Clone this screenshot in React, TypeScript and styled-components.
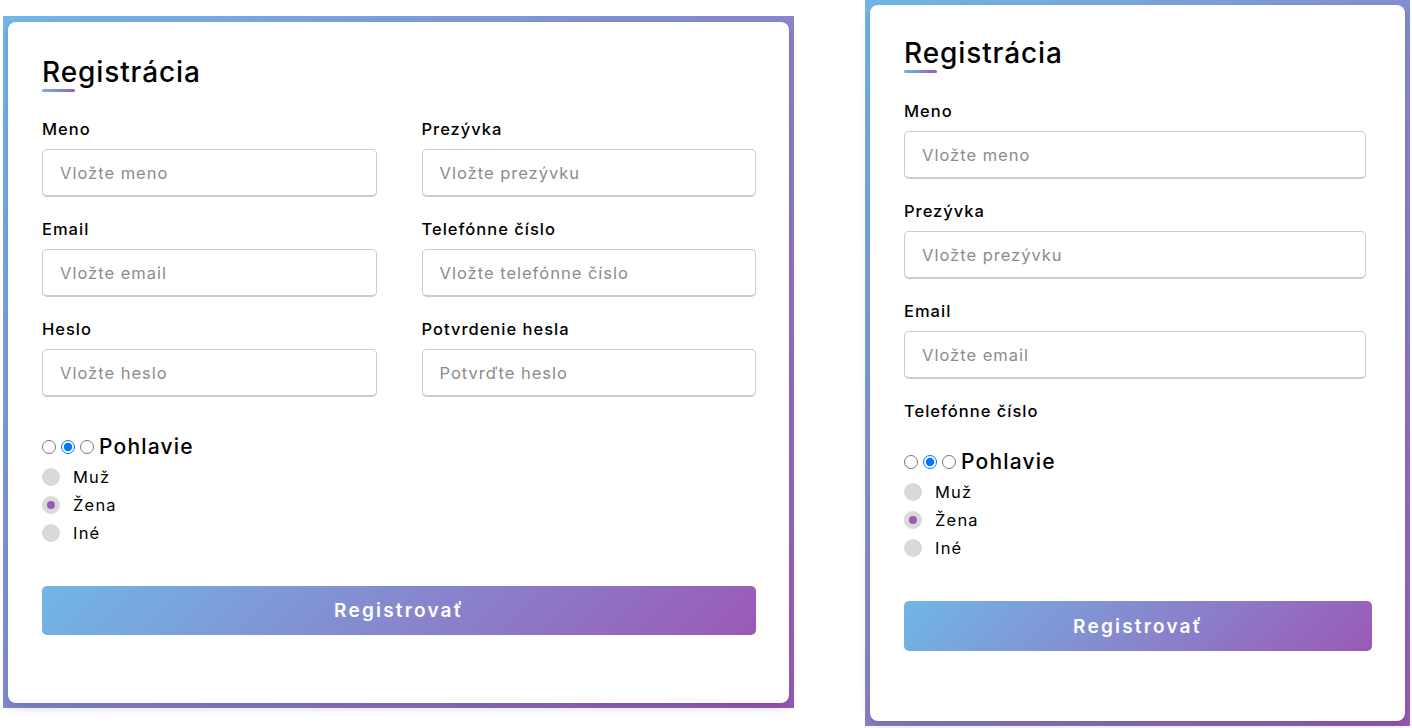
import { createGlobalStyle } from 'styled-components';
import styled from 'styled-components';

const GlobalStyle = createGlobalStyle`
  html, body {
    margin: 0;
    padding: 0;
    background: #fff;
  }
  body {
    font-family: Inter, 'Open Sans', 'Noto Sans', sans-serif;
    color: #000;
  }
  * {
    box-sizing: border-box;
  }
`;

const gradient = 'linear-gradient(135deg, #71b7e6, #9b59b6)';

const Page = styled.div`
  display: flex;
  align-items: flex-start;
  gap: 71px;
  padding-left: 3px;
  width: 1412px;
  height: 728px;
  overflow: hidden;
`;

const Frame = styled.div<{ $top: number; $width: number; $height: number; $borderTop: number }>`
  margin-top: ${p => p.$top}px;
  width: ${p => p.$width}px;
  height: ${p => p.$height}px;
  padding: ${p => p.$borderTop}px 5px 5px 5px;
  background: ${gradient};
  display: flex;
`;

const Card = styled.div<{ $padTop: number }>`
  flex: 1;
  background: #fff;
  border-radius: 8px;
  padding: ${p => p.$padTop}px 33px 0 34px;
  box-shadow: 0 5px 10px rgba(0, 0, 0, 0.15);
  overflow: hidden;
`;

const Title = styled.h1`
  margin: 0;
  font-size: 28px;
  line-height: 36px;
  font-weight: 500;
  letter-spacing: 0.9px;
`;

const TitleBar = styled.div`
  width: 33px;
  height: 3px;
  margin-top: -1px;
  border-radius: 3px;
  background: ${gradient};
`;

const Fields = styled.div<{ $cols: number; $gap: number }>`
  display: grid;
  grid-template-columns: repeat(${p => p.$cols}, 1fr);
  column-gap: 45px;
  row-gap: 20px;
  margin-top: ${p => p.$gap}px;
`;

const Field = styled.div<{ $inset: number }>`
  display: flex;
  flex-direction: column;
  gap: 8px;
  padding-right: ${p => p.$inset}px;
`;

const Label = styled.label`
  font-size: 16.5px;
  line-height: 24px;
  font-weight: 500;
  letter-spacing: 1px;
`;

const Input = styled.input<{ $h: number }>`
  height: ${p => p.$h}px;
  width: 100%;
  padding: 0 0 0 17px;
  font-family: inherit;
  font-size: 16.5px;
  letter-spacing: 1px;
  border: 1px solid #ccc;
  border-bottom-width: 2px;
  border-radius: 5px;
  outline: none;
  &::placeholder {
    color: #8c8c8c;
  }
`;

const Gender = styled.div<{ $gap: number }>`
  margin-top: ${p => p.$gap}px;
`;

const GenderTitle = styled.div`
  display: flex;
  align-items: center;
  font-size: 21px;
  line-height: 28px;
  font-weight: 500;
  letter-spacing: 1.2px;

  input {
    width: 14px;
    height: 14px;
    margin: 0 5px 0 0;
  }
`;

const Options = styled.div`
  margin-top: 2px;
  display: flex;
  flex-direction: column;
`;

const Option = styled.div`
  display: flex;
  align-items: center;
  gap: 13px;
  height: 28px;
  font-size: 16.5px;
  letter-spacing: 1.2px;
`;

const Dot = styled.span<{ $on?: boolean }>`
  width: 18px;
  height: 18px;
  border-radius: 50%;
  background: ${p => (p.$on ? '#9b59b6' : '#d9d9d9')};
  border: 5px solid ${p => (p.$on ? '#d9d9d9' : 'transparent')};
`;

const Button = styled.button<{ $h: number; $gap: number }>`
  display: block;
  width: 100%;
  height: ${p => p.$h}px;
  margin-top: ${p => p.$gap}px;
  border: none;
  border-radius: 5px;
  background: ${gradient};
  color: #fff;
  font-family: inherit;
  font-size: 19px;
  font-weight: 600;
  letter-spacing: 2.2px;
`;

interface FieldDef {
  label: string;
  placeholder?: string;
}

const desktopFields: FieldDef[] = [
  { label: 'Meno', placeholder: 'Vložte meno' },
  { label: 'Prezývka', placeholder: 'Vložte prezývku' },
  { label: 'Email', placeholder: 'Vložte email' },
  { label: 'Telefónne číslo', placeholder: 'Vložte telefónne číslo' },
  { label: 'Heslo', placeholder: 'Vložte heslo' },
  { label: 'Potvrdenie hesla', placeholder: 'Potvrďte heslo' },
];

const mobileFields: FieldDef[] = [
  { label: 'Meno', placeholder: 'Vložte meno' },
  { label: 'Prezývka', placeholder: 'Vložte prezývku' },
  { label: 'Email', placeholder: 'Vložte email' },
  { label: 'Telefónne číslo' },
];

interface FormProps {
  id: string;
  fields: FieldDef[];
  cols: number;
  fieldsGap: number;
  inputHeight: number;
  inset: number;
  genderGap: number;
  buttonGap: number;
  buttonHeight: number;
}

const RegistrationForm = (props: FormProps) => {
  const { id, fields, cols, fieldsGap, inputHeight, inset, genderGap, buttonGap, buttonHeight } = props;
  return (
    <form onSubmit={e => e.preventDefault()}>
      <Title>Registrácia</Title>
      <TitleBar />
      <Fields $cols={cols} $gap={fieldsGap}>
        {fields.map(f => (
          <Field key={f.label} $inset={inset}>
            <Label>{f.label}</Label>
            {f.placeholder && <Input $h={inputHeight} placeholder={f.placeholder} />}
          </Field>
        ))}
      </Fields>
      <Gender $gap={genderGap}>
        <GenderTitle>
          <input type='radio' name={id + '-g'} />
          <input type='radio' name={id + '-g'} defaultChecked />
          <input type='radio' name={id + '-g'} />
          <span>Pohlavie</span>
        </GenderTitle>
        <Options>
          <Option>
            <Dot />
            Muž
          </Option>
          <Option>
            <Dot $on />
            Žena
          </Option>
          <Option>
            <Dot />
            Iné
          </Option>
        </Options>
      </Gender>
      <Button type='submit' $h={buttonHeight} $gap={buttonGap}>
        Registrovať
      </Button>
    </form>
  );
};

export default function App() {
  return (
    <>
      <GlobalStyle />
      <Page>
        <Frame $top={16} $width={791} $height={692} $borderTop={6}>
          <Card $padTop={32}>
            <RegistrationForm
              id='desk'
              fields={desktopFields}
              cols={2}
              fieldsGap={25}
              inputHeight={48}
              inset={0}
              genderGap={36}
              buttonGap={39}
              buttonHeight={49}
            />
          </Card>
        </Frame>
        <Frame $top={0} $width={545} $height={726} $borderTop={5}>
          <Card $padTop={30}>
            <RegistrationForm
              id='mob'
              fields={mobileFields}
              cols={1}
              fieldsGap={26}
              inputHeight={48}
              inset={6}
              genderGap={25}
              buttonGap={39}
              buttonHeight={50}
            />
          </Card>
        </Frame>
      </Page>
    </>
  );
}
